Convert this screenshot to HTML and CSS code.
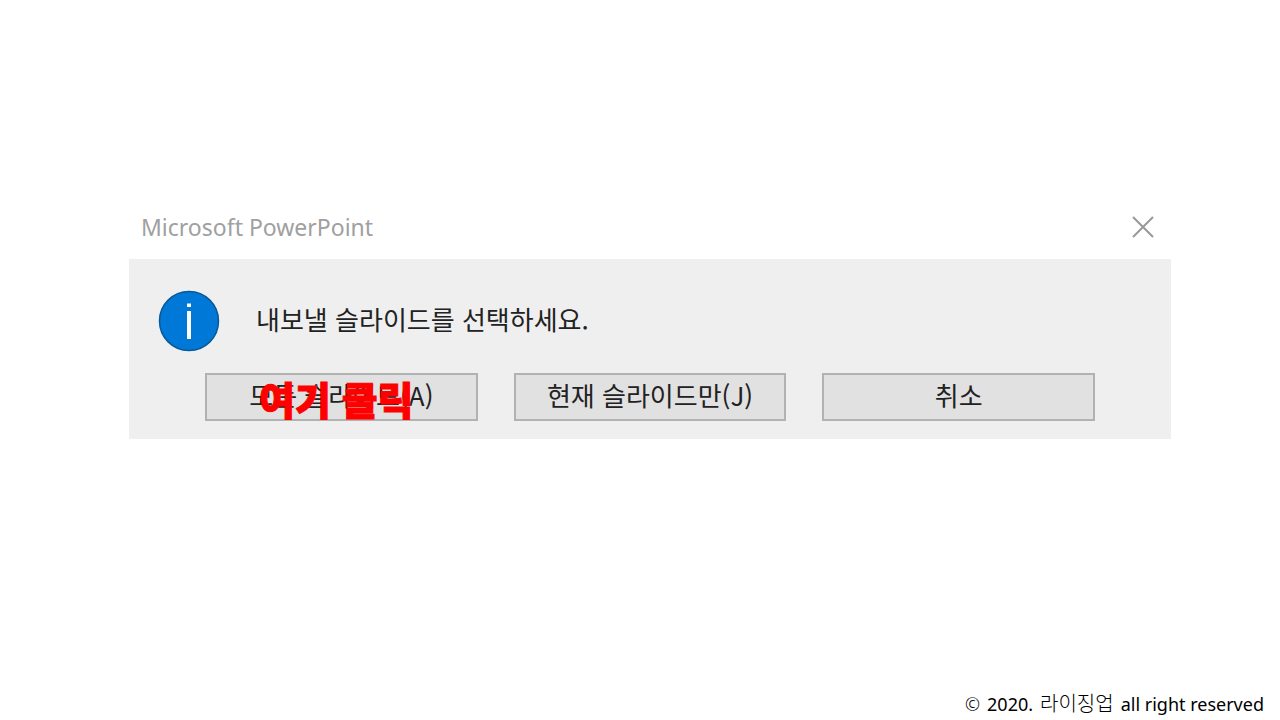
FILE: index.html
```html
<!DOCTYPE html>
<html lang="ko">
<head>
<meta charset="utf-8">
<title>Microsoft PowerPoint</title>
<link rel="stylesheet" href="styles.css">
</head>
<body>
<main class="stage">
  <section class="dialog" role="dialog" aria-labelledby="dialog-title" aria-describedby="dialog-message">
    <header class="titlebar">
      <h1 class="title" id="dialog-title">Microsoft PowerPoint</h1>
      <button class="close" type="button" aria-label="닫기">
        <svg width="24" height="24" viewBox="0 0 24 24" fill="none" stroke="#999" stroke-width="2"><path d="M2 2 22 22M22 2 2 22"/></svg>
      </button>
    </header>
    <div class="content">
      <div class="message">
        <svg class="info" width="62" height="62" viewBox="0 0 62 62">
          <circle cx="31" cy="31" r="29.5" fill="#0078d7" stroke="#075998" stroke-width="1.5"/>
          <path d="M29 13.500h4v3.500h-4zM29 21h4v28h-4z" fill="#fff"/>
        </svg>
        <p class="text" id="dialog-message">내보낼 슬라이드를 선택하세요.</p>
      </div>
      <div class="actions">
        <div class="choice">
          <button class="button" type="button">모든 슬라이드(A)</button>
          <span class="hint">여기 클릭</span>
        </div>
        <button class="button" type="button">현재 슬라이드만(J)</button>
        <button class="button" type="button">취소</button>
      </div>
    </div>
  </section>
</main>
<footer class="copyright"><span class="mark">©</span><span>2020.</span><span class="owner">라이징업</span><span>all right reserved</span></footer>
</body>
</html>
```
FILE: styles.css
```css
* {
  box-sizing: border-box;
}

body {
  margin: 0;
  min-height: 100vh;
  display: flex;
  flex-direction: column;
  background: #fff;
  color: #222;
  font-family: "Noto Sans", "Noto Sans CJK KR", sans-serif;
}

.stage {
  flex: 1;
  padding: 197px 109px 0 129px;
}

.titlebar {
  display: flex;
  align-items: center;
  justify-content: space-between;
  height: 62px;
  padding: 0 16px 2px 12px;
}

.title {
  margin: 0;
  color: #a0a0a0;
  font-size: 23px;
  font-weight: 400;
}

.close {
  display: flex;
  padding: 0;
  border: 0;
  background: none;
}

.content {
  padding: 31px 76px 18px 29px;
  background: #efefef;
}

.message {
  display: flex;
  align-items: center;
  gap: 36px;
}

.text {
  margin: 0;
  padding-bottom: 4px;
  font-family: "Noto Sans CJK KR", sans-serif;
  font-size: 26px;
  line-height: 40px;
}

.actions {
  display: grid;
  grid-template-columns: repeat(3, 1fr);
  gap: 36px;
  margin: 21px 0 0 47px;
}

.choice {
  position: relative;
}

.button {
  width: 100%;
  height: 48px;
  padding: 0 0 4px;
  border: 2px solid #b2b2b2;
  background: #e1e1e1;
  color: #222;
  font-family: "Noto Sans CJK KR", sans-serif;
  font-size: 26px;
  line-height: 40px;
}

.hint {
  position: absolute;
  top: 3px;
  left: 54px;
  color: #f00;
  font-family: "Noto Sans CJK KR", sans-serif;
  font-size: 39px;
  font-weight: 900;
  line-height: 44px;
  white-space: nowrap;
  pointer-events: none;
  -webkit-text-stroke: 1px #f00;
}

.copyright {
  display: flex;
  align-items: baseline;
  justify-content: flex-end;
  gap: 7px;
  padding: 0 16px 2px;
  color: #000;
  font-size: 18px;
  line-height: 28px;
}

.mark {
  font-weight: 300;
}

.owner {
  font-family: "Noto Sans CJK KR", sans-serif;
  font-size: 20px;
  font-weight: 300;
}
```
